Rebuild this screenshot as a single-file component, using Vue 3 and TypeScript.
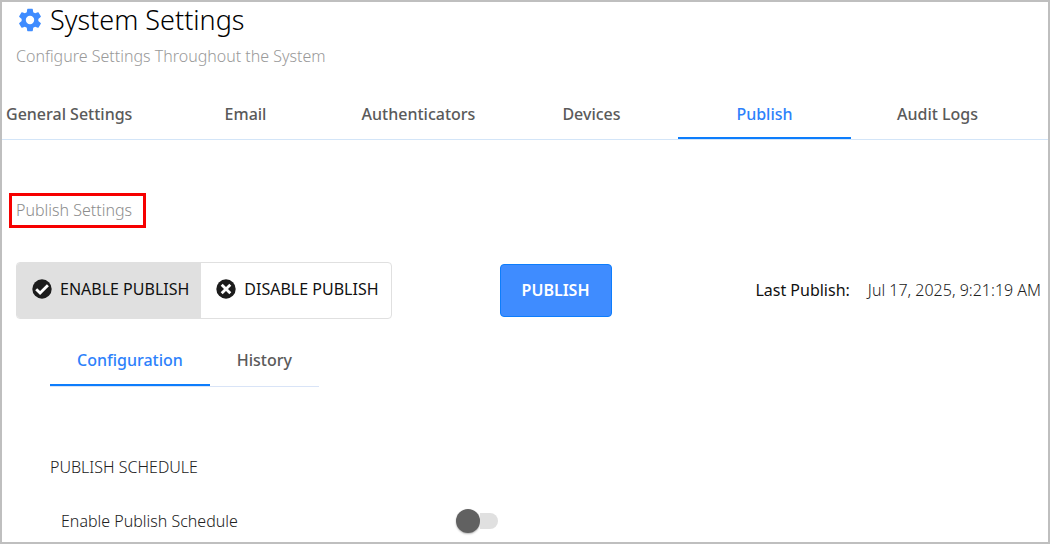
<script setup lang="ts">
import { ref } from 'vue'

const tabs: string[] = ['General Settings', 'Email', 'Authenticators', 'Devices', 'Publish', 'Audit Logs']
const activeTab = ref('Publish')
const subTabs: string[] = ['Configuration', 'History']
const activeSubTab = ref('Configuration')
const publishEnabled = ref(true)
const scheduleEnabled = ref(false)
</script>

<template>
  <main class="page">
    <header class="header">
      <h1 class="title">
        <svg class="gear" viewBox="0 0 24 24" aria-hidden="true">
          <path
            d="M19.140 12.940c.04-.3.06-.61.06-.94 0-.32-.02-.64-.07-.94l2.030-1.580c.18-.14.23-.41.12-.61l-1.920-3.320c-.12-.22-.37-.29-.59-.22l-2.390.96c-.5-.38-1.030-.7-1.620-.94l-.36-2.540c-.04-.24-.24-.41-.48-.41h-3.840c-.24 0-.43.17-.47.41l-.36 2.540c-.59.24-1.130.57-1.620.94l-2.390-.96c-.22-.08-.47 0-.59.22L2.740 8.870c-.12.21-.08.470.12.610l2.030 1.580c-.05.3-.09.630-.09.940s.02.640.07.940l-2.030 1.580c-.18.140-.23.410-.12.610l1.920 3.320c.12.220.370.290.590.220l2.390-.96c.5.380 1.030.7 1.620.94l.36 2.540c.05.240.240.410.480.410h3.840c.24 0 .44-.17.470-.41l.36-2.540c.59-.24 1.130-.56 1.620-.94l2.390.96c.22.080.470 0 .590-.22l1.920-3.320c.12-.22.070-.47-.12-.61l-2.010-1.580zM12 15.600a3.600 3.600 0 1 1 0-7.200 3.600 3.600 0 0 1 0 7.200z"
          />
        </svg>
        System Settings
      </h1>
      <p class="subtitle">Configure Settings Throughout the System</p>
    </header>

    <nav class="tabs" role="tablist">
      <button
        v-for="tab in tabs"
        :key="tab"
        type="button"
        role="tab"
        class="tab"
        :class="{ active: tab === activeTab }"
        :aria-selected="tab === activeTab"
        @click="activeTab = tab"
      >
        {{ tab }}
      </button>
    </nav>

    <h2 class="section-title">Publish Settings</h2>

    <div class="actions">
      <div class="toggle-group" role="group">
        <button type="button" class="toggle" :class="{ selected: publishEnabled }" @click="publishEnabled = true">
          <svg class="state-icon" viewBox="0 0 20 20" aria-hidden="true">
            <circle cx="10" cy="10" r="9.700" />
            <path d="M4.200 10.200l3.900 3.900 7.800-7.800" />
          </svg>
          ENABLE PUBLISH
        </button>
        <button type="button" class="toggle" :class="{ selected: !publishEnabled }" @click="publishEnabled = false">
          <svg class="state-icon" viewBox="0 0 20 20" aria-hidden="true">
            <circle cx="10" cy="10" r="9.700" />
            <path d="M5.700 5.700l8.600 8.600M14.300 5.700l-8.600 8.600" />
          </svg>
          DISABLE PUBLISH
        </button>
      </div>
      <button type="button" class="publish">PUBLISH</button>
      <p class="last"><span class="last-label">Last Publish:</span><span>Jul 17, 2025, 9:21:19 AM</span></p>
    </div>

    <section class="details">
      <div class="subtabs" role="tablist">
        <button
          v-for="tab in subTabs"
          :key="tab"
          type="button"
          role="tab"
          class="subtab"
          :class="{ active: tab === activeSubTab }"
          :aria-selected="tab === activeSubTab"
          @click="activeSubTab = tab"
        >
          {{ tab }}
        </button>
      </div>
      <h3 class="schedule-title">PUBLISH SCHEDULE</h3>
      <div class="setting">
        <label for="schedule">Enable Publish Schedule</label>
        <input id="schedule" v-model="scheduleEnabled" type="checkbox" role="switch" class="switch" />
      </div>
    </section>
  </main>
</template>

<style>
body {
  margin: 0;
  background: #fff;
}
</style>

<style scoped>
.page {
  box-sizing: border-box;
  min-height: 100vh;
  border: 2px solid #bfbfbf;
  font-family: "Noto Sans", "Open Sans", sans-serif;
  font-size: 16px;
  font-weight: 300;
  line-height: 20px;
  color: #212121;
}

button {
  margin: 0;
  border: 0;
  background: transparent;
  font-family: inherit;
  font-size: 16px;
  line-height: 20px;
  cursor: pointer;
  white-space: nowrap;
}

h1,
h2,
h3,
p {
  margin: 0;
  font-size: 16px;
  font-weight: 300;
}

.header {
  padding: 0 14px;
}

.title {
  display: flex;
  align-items: center;
  gap: 6px;
  font-size: 27px;
  line-height: 36px;
  color: #000;
}

.gear {
  width: 28px;
  height: 28px;
  fill: #3f8cff;
}

.subtitle {
  margin-top: 8px;
  color: #999;
}

.tabs {
  display: grid;
  grid-template-columns: 157fr repeat(5, 173fr);
  margin-top: 22px;
  padding-right: 24px;
  border-bottom: 1px solid #d3e5f8;
}

.tab {
  height: 51px;
  padding: 2px 0 0;
  border-bottom: 2px solid transparent;
  font-weight: 500;
  color: #5a5a5a;
}

.tab:first-child {
  padding-left: 4px;
  text-align: left;
}

.tab.active,
.subtab.active {
  border-bottom-color: #0d7dfc;
  color: #2d81fb;
}

.section-title {
  width: fit-content;
  margin: 53px 0 0 7px;
  padding: 4px 11px 5px 4px;
  border: 3px solid #f60000;
  color: #8c8c8c;
}

.actions {
  display: flex;
  align-items: center;
  margin-top: 34px;
  padding: 0 7px 0 14px;
}

.toggle-group {
  display: flex;
  overflow: hidden;
  border: 1px solid #e0e0e0;
  border-radius: 4px;
}

.toggle {
  display: flex;
  align-items: center;
  gap: 8px;
  height: 55px;
  padding: 0 12px 4px 15px;
  font-weight: 400;
  color: #111;
}

.toggle.selected {
  background: #e0e0e0;
}

.state-icon {
  width: 20px;
  height: 20px;
  fill: #1c1c1c;
}

.state-icon path {
  fill: none;
  stroke: #fff;
  stroke-width: 2.800;
}

.publish {
  width: 112px;
  height: 53px;
  padding: 0 0 2px;
  margin-left: 108px;
  border: 1px solid #0d7dfc;
  border-radius: 4px;
  background: #3f8cff;
  font-weight: 600;
  color: #fff;
}

.last {
  display: flex;
  gap: 18px;
  margin-left: auto;
  padding-bottom: 2px;
  white-space: nowrap;
}

.last-label {
  font-weight: 400;
  color: #111;
}

.details {
  padding: 14px 48px 0;
}

.subtabs {
  display: flex;
  width: fit-content;
  border-bottom: 1px solid #d9e4f7;
}

.subtab {
  height: 53px;
  padding: 2px 27px 0;
  border-bottom: 2px solid transparent;
  font-weight: 500;
  color: #5a5a5a;
}

.schedule-title {
  margin-top: 70px;
}

.setting {
  display: grid;
  grid-template-columns: 395px auto;
  justify-content: start;
  align-items: center;
  margin-top: 32px;
  padding-left: 11px;
}

.switch {
  appearance: none;
  display: flex;
  align-items: center;
  width: 42px;
  height: 24px;
  margin: 0;
  cursor: pointer;
}

.switch::before {
  content: "";
  flex: none;
  width: 24px;
  height: 24px;
  border-radius: 50%;
  background: #616161;
  box-shadow: 0 1px 2px rgba(0, 0, 0, 0.3);
}

.switch::after {
  content: "";
  flex: none;
  width: 18px;
  height: 16px;
  border-radius: 0 8px 8px 0;
  background: #e0e0e0;
}

.switch:checked {
  flex-direction: row-reverse;
}

.switch:checked::before {
  background: #3f8cff;
}

.switch:checked::after {
  border-radius: 8px 0 0 8px;
}
</style>
